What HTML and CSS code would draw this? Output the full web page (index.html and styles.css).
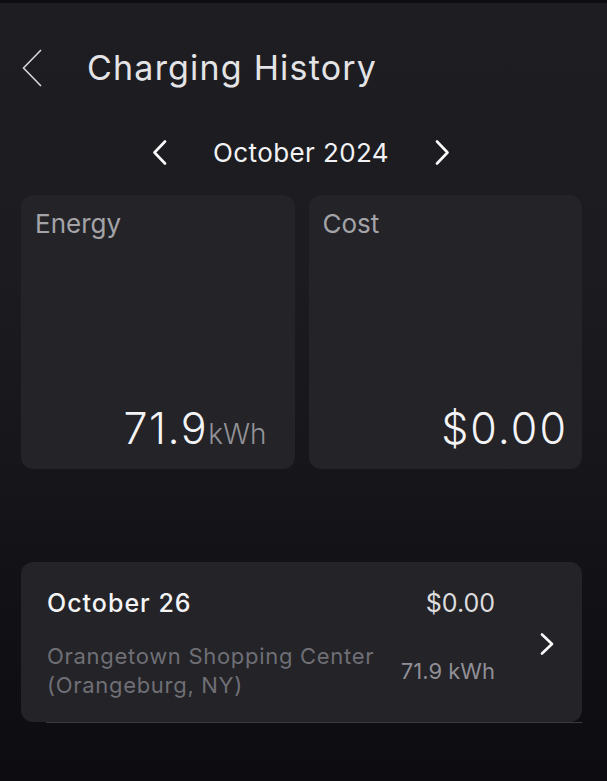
FILE: index.html
```html
<!DOCTYPE html>
<html lang="en">
<head>
  <meta charset="UTF-8">
  <title>Charging History</title>
  <link rel="stylesheet" href="styles.css">
</head>
<body>
  <div class="header">
    <svg class="back" width="20" height="38" viewBox="0 0 20 38">
      <path d="M19 1 L1.5 19 L19 37" />
    </svg>
    <h1>Charging History</h1>
  </div>

  <div class="month-nav">
    <svg class="nav-arrow" width="15" height="25" viewBox="0 0 15 25">
      <path d="M13 1.5 L2.5 12.5 L13 23.5" />
    </svg>
    <span class="month">October 2024</span>
    <svg class="nav-arrow" width="15" height="25" viewBox="0 0 15 25">
      <path d="M2 1.5 L12.5 12.5 L2 23.5" />
    </svg>
  </div>

  <div class="stats">
    <div class="stat">
      <div class="stat-label">Energy</div>
      <div class="stat-value energy">71.9<span class="unit">kWh</span></div>
    </div>
    <div class="stat">
      <div class="stat-label">Cost</div>
      <div class="stat-value cost">$0.00</div>
    </div>
  </div>

  <div class="session">
    <div class="session-info">
      <div class="session-date">October 26</div>
      <div class="session-cost">$0.00</div>
      <div class="session-place">Orangetown Shopping Center<br>(Orangeburg, NY)</div>
      <div class="session-energy">71.9 kWh</div>
    </div>
    <svg class="row-arrow" width="14" height="22" viewBox="0 0 14 22">
      <path d="M2 1.5 L12 11 L2 20.5" />
    </svg>
  </div>
  <div class="session-divider"></div>
</body>
</html>
```

FILE: styles.css
```css
html, body {
  height: 100%;
}
body {
  margin: 0;
  border-top: 3px solid #0e0e12;
  box-sizing: border-box;
  background: linear-gradient(#1d1d22 0%, #1b1b20 35%, #16161b 58%, #111116 75%, #0d0d11 100%);
  font-family: Inter, "Noto Sans", sans-serif;
  color: #ececee;
}

.header {
  display: flex;
  align-items: center;
  margin-top: 44px;
  padding-left: 22px;
  gap: 45px;
}
.header h1 {
  margin: 0;
  font-size: 34px;
  font-weight: 400;
  line-height: 41px;
  letter-spacing: 1.2px;
  color: #e4e4e6;
}
.back path {
  fill: none;
  stroke: #d6d6d8;
  stroke-width: 1.6;
}

.month-nav {
  display: flex;
  align-items: center;
  justify-content: center;
  gap: 46px;
  margin-top: 49px;
  padding-right: 5px;
}
.month {
  font-size: 26px;
  line-height: 31px;
  letter-spacing: 0.4px;
  color: #f2f2f4;
}
.nav-arrow path,
.row-arrow path {
  fill: none;
  stroke: #fafafa;
  stroke-width: 2.6;
  stroke-linecap: round;
  stroke-linejoin: round;
}

.stats {
  display: grid;
  grid-template-columns: 1fr 1fr;
  gap: 14px;
  margin-top: 27px;
  padding: 0 25px 0 21px;
}
.stat {
  height: 274px;
  box-sizing: border-box;
  background: #232328;
  border-radius: 12px;
  padding: 13px 16px 19px 14px;
  display: flex;
  flex-direction: column;
  justify-content: space-between;
}
.stat-label {
  font-size: 26px;
  color: #a3a3a8;
}
.stat-value {
  align-self: flex-end;
  font-size: 43px;
  font-weight: 300;
  line-height: 1;
  color: #f4f4f6;
}
.stat-value.energy {
  margin-right: 12px;
  letter-spacing: 1.5px;
}
.stat-value.cost {
  letter-spacing: 2px;
  margin-right: -2px;
}
.unit {
  font-size: 28px;
  letter-spacing: 0;
  color: #929297;
}

.session {
  display: flex;
  align-items: center;
  margin: 93px 25px 0 21px;
  padding: 26px 28px 22px 26px;
  background: #232328;
  border-radius: 12px;
}
.session-info {
  flex: 1;
  display: grid;
  grid-template-columns: 1fr auto;
  align-items: center;
  row-gap: 24px;
  margin-right: 45px;
}
.session-date {
  font-size: 25px;
  font-weight: 450;
  line-height: 30px;
  letter-spacing: 1px;
  color: #f4f4f6;
}
.session-cost {
  justify-self: end;
  font-size: 25px;
  line-height: 30px;
  color: #dcdcde;
}
.session-place {
  font-size: 22px;
  line-height: 29px;
  letter-spacing: 0.7px;
  color: #6f6f75;
}
.session-energy {
  justify-self: end;
  font-size: 22px;
  line-height: 29px;
  color: #8f8f95;
}

.session-divider {
  height: 1px;
  margin: 0 25px 0 46px;
  background: #3a3a40;
}
```
